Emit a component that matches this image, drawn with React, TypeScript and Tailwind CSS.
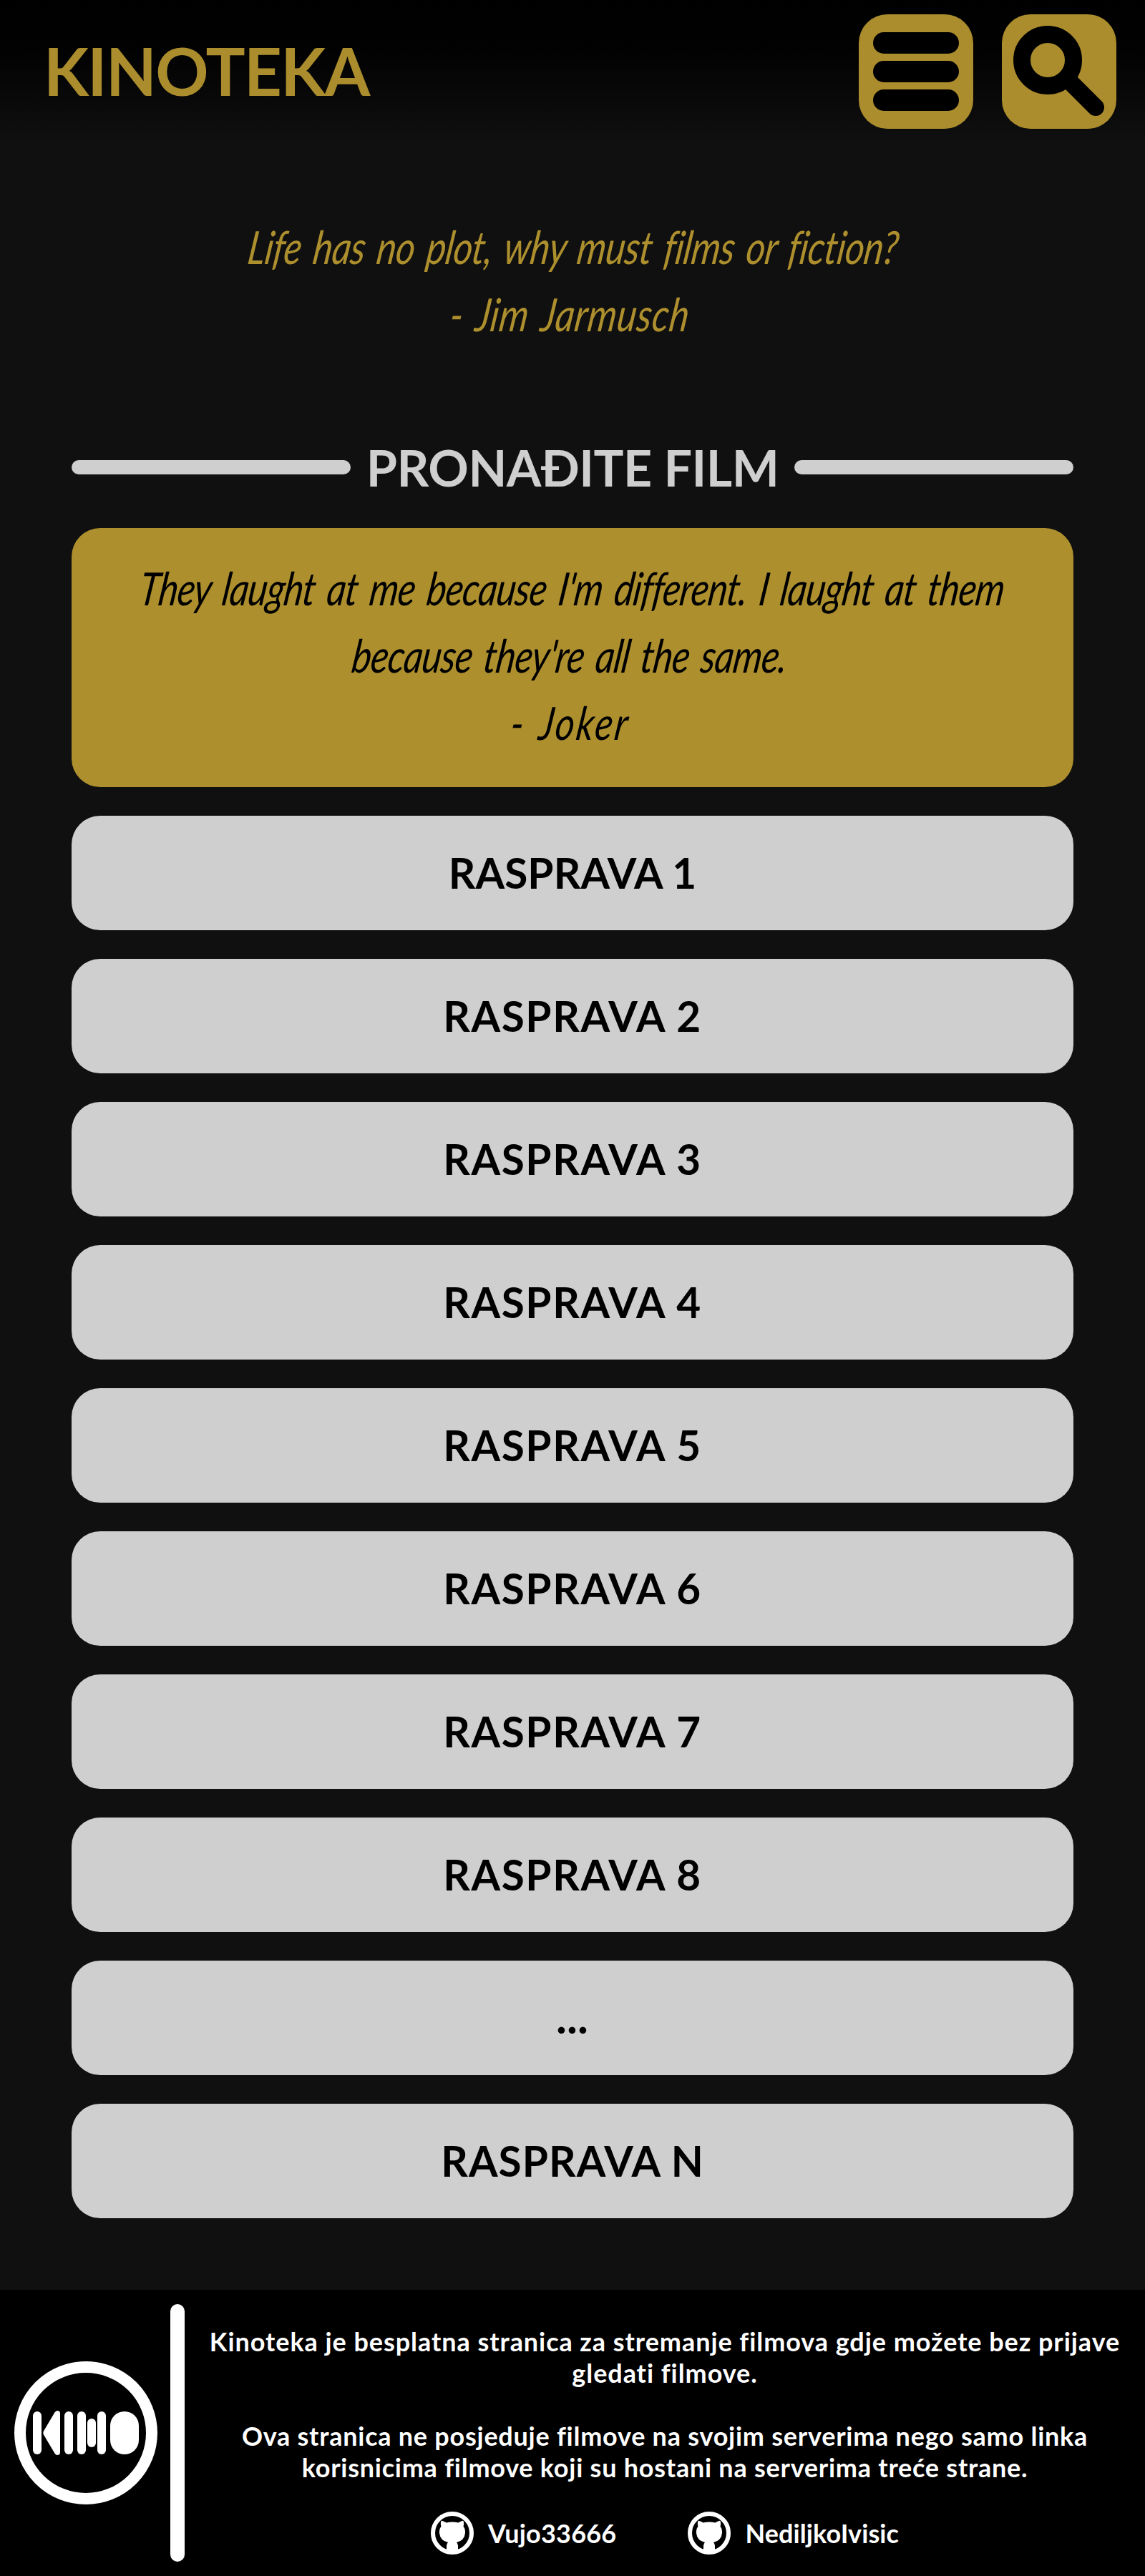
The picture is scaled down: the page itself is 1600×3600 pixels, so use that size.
import type { ReactNode } from "react";

const discussions = ["1", "2", "3", "4", "5", "6", "7", "8"];

function QuoteLine({ children, className = "" }: { children: ReactNode; className?: string }) {
  return (
    <span
      className={`block h-[94px] origin-center -skew-x-[10deg] scale-x-[0.8] whitespace-nowrap text-[64px] leading-[94px] italic ${className}`}
    >
      {children}
    </span>
  );
}

function MenuButton() {
  return (
    <button aria-label="Izbornik" className="flex size-40 flex-col items-center justify-center gap-2.5 rounded-[40px] bg-[#ab8d2d]">
      <span className="h-[30px] w-[120px] rounded-full bg-black" />
      <span className="h-[30px] w-[120px] rounded-full bg-black" />
      <span className="h-[30px] w-[120px] rounded-full bg-black" />
    </button>
  );
}

function SearchButton() {
  return (
    <button aria-label="Pretraga" className="size-40 rounded-[40px] bg-[#ab8d2d]">
      <svg viewBox="0 0 160 160" className="size-40" fill="none" stroke="black">
        <circle cx="64" cy="64" r="36" strokeWidth="24" />
        <path d="M92 91L131 130" strokeWidth="24" strokeLinecap="round" />
      </svg>
    </button>
  );
}

function DiscussionButton({ children, className = "" }: { children: ReactNode; className?: string }) {
  return (
    <button
      className={`flex h-40 w-full items-center justify-center rounded-[40px] bg-[#cfcfcf] pb-[2px] text-[58.5px] leading-none text-black ${className}`}
    >
      {children}
    </button>
  );
}

function KinoLogo() {
  return (
    <svg viewBox="0 0 200 200" className="size-[200px] shrink-0" fill="white">
      <circle cx="100" cy="100" r="92" fill="none" stroke="white" strokeWidth="16" />
      <rect x="26" y="70" width="12" height="60" rx="6" />
      <path d="M40.7 98L56.4 71.5Q58 69 60 69Q64 69 64 73V127Q64 131 60 131Q58 131 56.4 128.5L40.7 102Q40 100 40.7 98Z" />
      <rect x="70" y="70" width="12" height="60" rx="6" />
      <rect x="88" y="70" width="12" height="60" rx="6" />
      <rect x="102" y="80" width="12" height="40" rx="6" />
      <rect x="116" y="70" width="12" height="60" rx="6" />
      <rect x="134" y="70" width="40" height="60" rx="20" />
    </svg>
  );
}

function GithubLogo() {
  return (
    <svg viewBox="0 0 60 60" className="size-[60px] shrink-0" fill="white">
      <circle cx="30" cy="30" r="27" fill="none" stroke="white" strokeWidth="6" />
      <path d="M14.5 13Q15.5 12 21.5 15.5Q30 13.4 38.5 15.5Q44.5 12 45.5 13Q46.8 17 45.5 20.5Q48.5 24 48 30Q47 40.5 36 43Q38 45 38 48V57H22V48Q22 45 24 43Q13 40.5 12 30Q11.5 24 14.5 20.5Q13.2 17 14.5 13Z" />
    </svg>
  );
}

function GithubLink({ name, className = "" }: { name: string; className?: string }) {
  return (
    <a className={`flex items-center gap-5 ${className}`}>
      <GithubLogo />
      <span>{name}</span>
    </a>
  );
}

export default function App() {
  return (
    <div className="flex h-[3600px] w-[1600px] flex-col bg-[#101010] font-['Lato',sans-serif]">
      <header className="flex h-[200px] shrink-0 items-center justify-between bg-[linear-gradient(to_bottom,#000_0%,#020202_35%,#080808_65%,#101010_100%)] pr-10 pl-[61px]">
        <h1 className="pb-[2px] text-[92px] leading-none font-bold tracking-[-1.7px] text-[#ab8d2d]">KINOTEKA</h1>
        <nav className="flex gap-10">
          <MenuButton />
          <SearchButton />
        </nav>
      </header>

      <main className="flex flex-1 flex-col px-[100px]">
        <blockquote className="mt-[98px] flex h-[188px] flex-col items-center pl-[3px] text-[#ad8f2e]">
          <QuoteLine className="tracking-[-0.45px] [word-spacing:6px]">Life has no plot, why must films or fiction?</QuoteLine>
          <QuoteLine className="mr-[8px] tracking-[0.9px] [word-spacing:7px]">- Jim Jarmusch</QuoteLine>
        </blockquote>

        <div className="mt-[117px] flex h-[100px] items-center justify-between text-[#cfcfcf]">
          <span className="h-5 w-[390px] rounded-full bg-[#cfcfcf]" />
          <h2 className="text-[70px] leading-none font-bold tracking-[-0.5px] whitespace-nowrap">PRONAĐITE FILM</h2>
          <span className="h-5 w-[390px] rounded-full bg-[#cfcfcf]" />
        </div>

        <section className="mt-[35px] flex flex-col gap-10">
          <blockquote className="flex h-[362px] flex-col items-center rounded-[40px] bg-[#ad8f2e] pt-[37px] text-black">
            <QuoteLine className="tracking-[-1px] [word-spacing:7px]">They laught at me because I'm different. I laught at them</QuoteLine>
            <QuoteLine className="mr-[6px] tracking-[-0.8px] [word-spacing:6px]">because they're all the same.</QuoteLine>
            <QuoteLine className="mr-[4px] tracking-[3.8px] [word-spacing:6px]">- Joker</QuoteLine>
          </blockquote>
          {discussions.map((n) => (
            <DiscussionButton key={n} className={n === "1" ? "font-bold tracking-[0.1px]" : "font-bold tracking-[1.6px]"}>
              RASPRAVA {n}
            </DiscussionButton>
          ))}
          <DiscussionButton className="font-black tracking-[1px]">...</DiscussionButton>
          <DiscussionButton className="font-bold tracking-[1.1px]">RASPRAVA N</DiscussionButton>
        </section>
      </main>

      <footer className="flex h-[400px] shrink-0 items-center bg-black pl-5 text-white">
        <KinoLogo />
        <span className="ml-[18px] h-[360px] w-5 shrink-0 rounded-full bg-white" />
        <div className="flex h-full flex-1 flex-col items-center pt-[50px] text-center text-[36px] leading-[44px] font-bold whitespace-nowrap">
          <p className="tracking-[0.94px]">
            Kinoteka je besplatna stranica za stremanje filmova gdje možete bez prijave
            <br />
            gledati filmove.
          </p>
          <p className="mt-[44px] tracking-[0.75px]">
            Ova stranica ne posjeduje filmove na svojim serverima nego samo linka
            <br />
            korisnicima filmove koji su hostani na serverima treće strane.
          </p>
          <div className="mt-10 flex gap-[100px]">
            <GithubLink name="Vujo33666" className="tracking-[0.2px]" />
            <GithubLink name="NediljkoIvisic" className="tracking-[0.1px]" />
          </div>
        </div>
      </footer>
    </div>
  );
}
